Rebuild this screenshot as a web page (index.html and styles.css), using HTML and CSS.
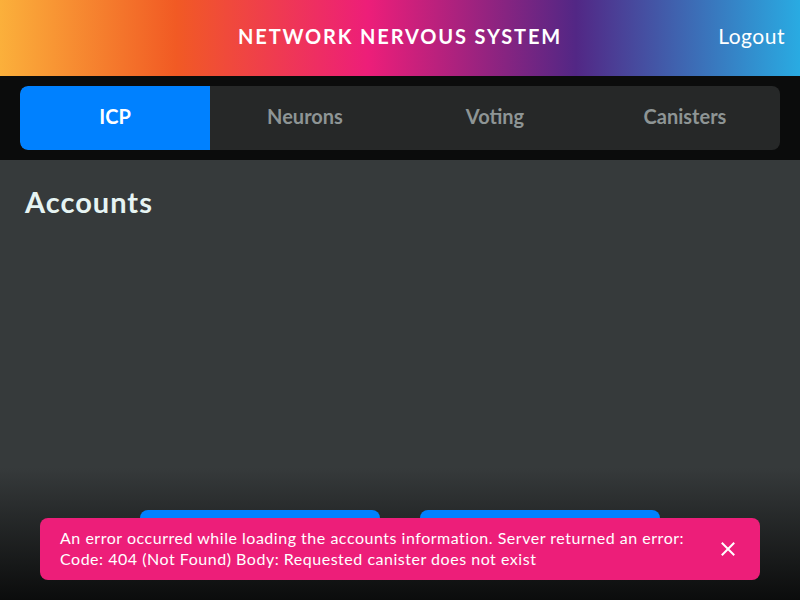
FILE: index.html
```html
<!DOCTYPE html>
<html lang="en">
<head>
<meta charset="utf-8">
<title>Network Nervous System</title>
<link rel="stylesheet" href="styles.css">
</head>
<body>
<header class="header">
  <div class="header-side"></div>
  <h1 class="title">NETWORK NERVOUS SYSTEM</h1>
  <div class="header-side header-right"><button class="logout">Logout</button></div>
</header>
<nav class="tabs-wrap">
  <div class="tabs">
    <button class="tab tab-active">ICP</button>
    <button class="tab">Neurons</button>
    <button class="tab">Voting</button>
    <button class="tab">Canisters</button>
  </div>
</nav>
<main class="main">
  <h2 class="heading">Accounts</h2>
  <div class="spacer"></div>
  <div class="actions">
    <button class="action"></button>
    <button class="action"></button>
  </div>
  <div class="toast">
    <p class="toast-text">An error occurred while loading the accounts information. Server returned an error: Code: 404 (Not Found) Body: Requested canister does not exist</p>
    <button class="toast-close" aria-label="Close">
      <svg width="14" height="14" viewBox="0 0 14 14"><path d="M1.5 1.5 L12.5 12.5 M12.5 1.5 L1.5 12.5" stroke="#fff" stroke-width="2" stroke-linecap="square" fill="none"/></svg>
    </button>
  </div>
</main>
</body>
</html>
```

FILE: styles.css
```css
* { box-sizing: border-box; }
html, body { margin: 0; padding: 0; }
body {
  width: 800px;
  height: 600px;
  overflow: hidden;
  background: #0b0c0c;
  font-family: Lato, "Liberation Sans", sans-serif;
  color: #fff;
  display: flex;
  flex-direction: column;
}
button { font-family: inherit; border: none; background: none; color: inherit; cursor: pointer; padding: 0; }
.header {
  height: 76px;
  flex: none;
  display: grid;
  grid-template-columns: 1fr auto 1fr;
  align-items: center;
  padding-bottom: 5px;
  background: linear-gradient(90deg, #fbb03b 0%, #f15a24 22%, #ed1e79 46%, #522785 72%, #29abe2 100%);
}
.title {
  margin: 0;
  font-size: 20px;
  font-weight: 700;
  letter-spacing: 1.85px;
  color: #fff;
  line-height: 24px;
}
.header-right { display: flex; justify-content: flex-end; padding-right: 15px; }
.logout { font-size: 21px; font-weight: 400; color: #fff; letter-spacing: 0.5px; line-height: 24px; }
.tabs-wrap {
  flex: none;
  background: #0b0c0c;
  padding: 10px 20px;
}
.tabs {
  display: grid;
  grid-template-columns: repeat(4, 1fr);
  height: 64px;
  background: #262828;
  border-radius: 8px;
  overflow: hidden;
}
.tab {
  font-size: 20px;
  font-weight: 700;
  color: #8e9595;
  padding-bottom: 4px;
}
.tab-active { background: #0081ff; color: #fff; border-radius: 8px 0 0 8px; }
.main {
  flex: 1;
  position: relative;
  display: flex;
  flex-direction: column;
  background: linear-gradient(180deg, #363a3b 0%, #363a3b 70%, #0b0c0c 100%);
  padding: 0 25px;
}
.heading {
  margin: 25px 0 0;
  font-size: 29px;
  font-weight: 700;
  color: #e6f4f3;
  line-height: 34px;
  letter-spacing: 1px;
}
.spacer { flex: 1; }
.actions {
  display: flex;
  justify-content: center;
  gap: 40px;
  height: 48px;
  margin-bottom: 42px;
}
.action {
  width: 240px;
  height: 48px;
  background: #0081ff;
  border-radius: 8px;
}
.toast {
  position: absolute;
  left: 40px;
  right: 40px;
  top: 358px;
  height: 62px;
  background: #ed1e79;
  border-radius: 8px;
  display: flex;
  align-items: center;
  padding: 0 20px 2px 20px;
  gap: 24px;
}
.toast-text {
  margin: 0;
  flex: 1;
  font-size: 16px;
  line-height: 21px;
  color: #fff;
  letter-spacing: 0.52px;
}
.toast-close {
  width: 24px;
  height: 24px;
  display: flex;
  align-items: center;
  justify-content: center;
  margin-top: 2px;
}
```
